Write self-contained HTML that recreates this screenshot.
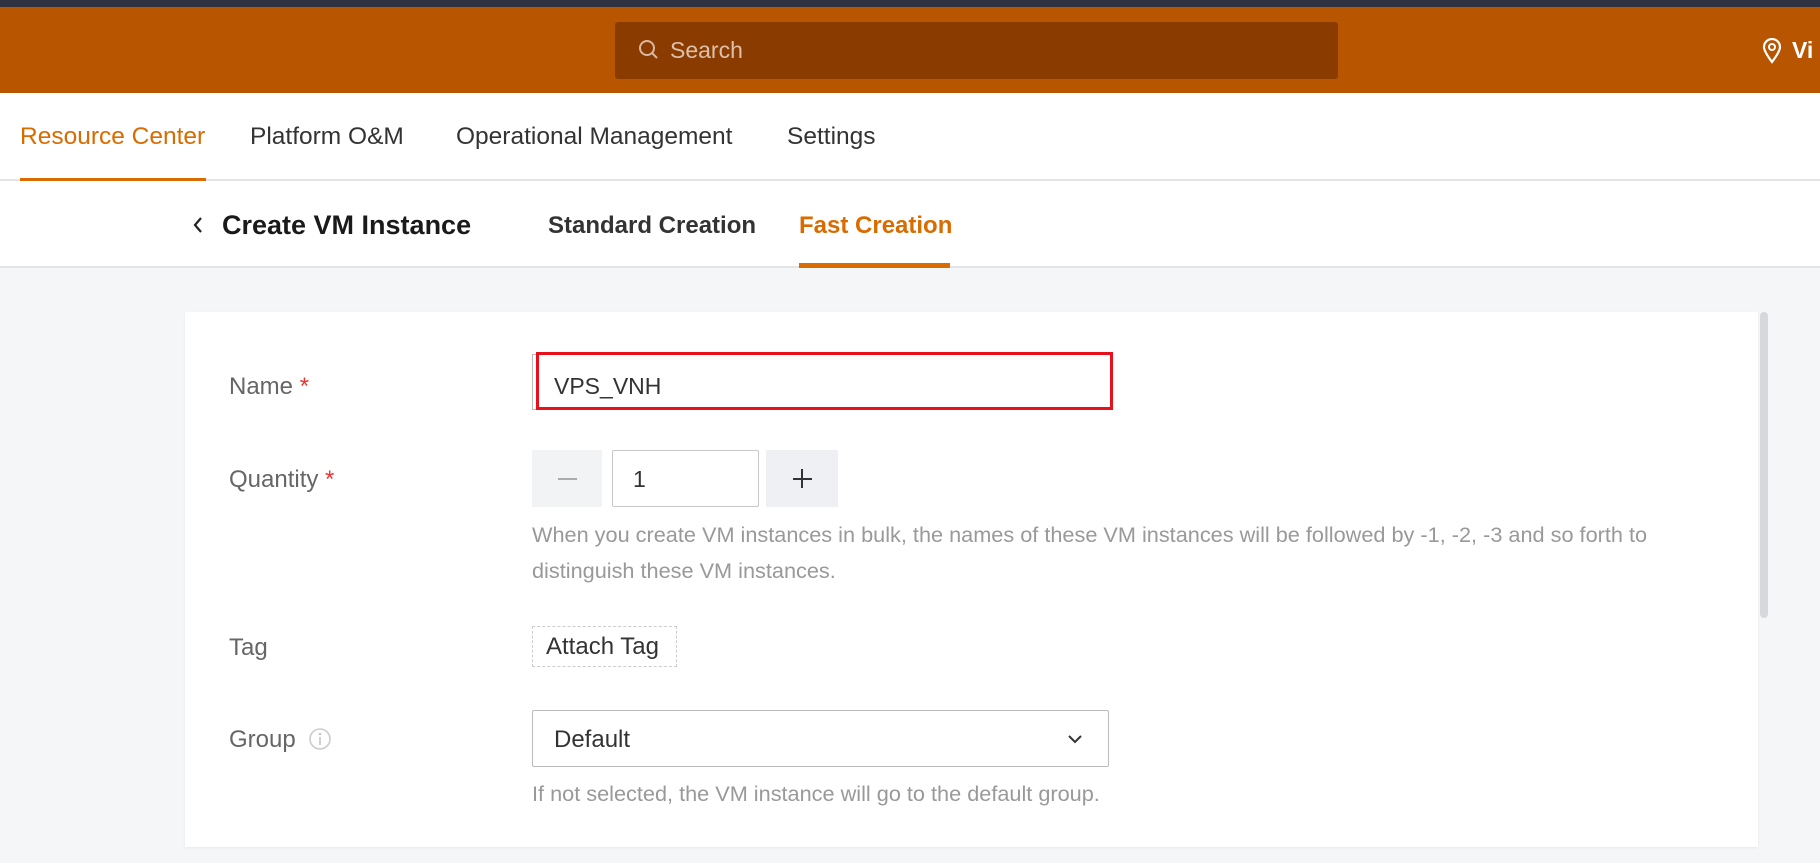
<!DOCTYPE html>
<html><head><meta charset="utf-8"><style>
*{margin:0;padding:0;box-sizing:border-box}
body{width:1820px;height:863px;overflow:hidden;background:#f5f6f8;font-family:"Liberation Sans",sans-serif;position:relative}
.a{position:absolute;white-space:nowrap}
</style></head><body>
<div class="a" style="left:0;top:0;width:1820px;height:7px;background:#2f3240"></div>
<div class="a" style="left:0;top:7px;width:1820px;height:86px;background:#b85500"></div>
<div class="a" style="left:615px;top:22px;width:723px;height:57px;background:#8a3c00;border-radius:3px"></div>
<svg class="a" style="left:638px;top:39px" width="22" height="22" viewBox="0 0 22 22"><circle cx="9" cy="9" r="7" fill="none" stroke="#d9b8a0" stroke-width="2"/><path d="M14 14l5 5" stroke="#d9b8a0" stroke-width="2"/></svg>
<div class="a" style="left:670px;top:37px;font-size:23px;color:#dcc0ab">Search</div>
<svg class="a" style="left:1762px;top:38px" width="20" height="26" viewBox="0 0 20 26"><path d="M10 24C4 16 2 12 2 9a8 8 0 0116 0c0 3-2 7-8 15z" fill="none" stroke="#fff" stroke-width="2.2"/><circle cx="10" cy="9" r="3" fill="none" stroke="#fff" stroke-width="2"/></svg>
<div class="a" style="left:1792px;top:37px;font-size:23px;color:#fff;font-weight:bold">Vi</div>
<div class="a" style="left:0;top:93px;width:1820px;height:88px;background:#fff;border-bottom:2px solid #e4e4e4"></div>
<div class="a" style="left:20px;top:123px;font-size:24.5px;color:#d96b00">Resource Center</div>
<div class="a" style="left:20px;top:178px;width:186px;height:3px;background:#d96b00"></div>
<div class="a" style="left:250px;top:123px;font-size:24.5px;color:#333">Platform O&amp;M</div>
<div class="a" style="left:456px;top:123px;font-size:24.5px;color:#333">Operational Management</div>
<div class="a" style="left:787px;top:123px;font-size:24.5px;color:#333">Settings</div>
<div class="a" style="left:0;top:181px;width:1820px;height:87px;background:#fff;border-bottom:2px solid #e2e4e8"></div>
<svg class="a" style="left:192px;top:215px" width="12" height="20" viewBox="0 0 12 20"><path d="M9 3L3 10l6 7" fill="none" stroke="#222" stroke-width="2.2"/></svg>
<div class="a" style="left:222px;top:210px;font-size:27px;color:#1a1a1a;font-weight:bold">Create VM Instance</div>
<div class="a" style="left:548px;top:212px;font-size:24px;color:#333;font-weight:bold">Standard Creation</div>
<div class="a" style="left:799px;top:212px;font-size:24px;color:#d96b00;font-weight:bold">Fast Creation</div>
<div class="a" style="left:799px;top:263px;width:151px;height:5px;background:#d96b00"></div>
<div class="a" style="left:185px;top:312px;width:1573px;height:535px;background:#fff;box-shadow:0 1px 3px rgba(0,0,0,.06)"></div>
<div class="a" style="left:1760px;top:312px;width:8px;height:306px;background:#d8d8dc;border-radius:4px"></div>
<div class="a" style="left:229px;top:373px;font-size:24px;color:#666">Name <span style="color:#e33">*</span></div>
<div class="a" style="left:532px;top:354px;width:581px;height:56px;border:1px solid #bbb"></div>
<div class="a" style="left:536px;top:352px;width:577px;height:58px;border:3px solid #e8101a"></div>
<div class="a" style="left:554px;top:373px;font-size:23px;color:#333">VPS_VNH</div>
<div class="a" style="left:229px;top:466px;font-size:24px;color:#666">Quantity <span style="color:#e33">*</span></div>
<div class="a" style="left:532px;top:450px;width:70px;height:57px;background:#f2f3f5"></div>
<div class="a" style="left:558px;top:478px;width:19px;height:2px;background:#aaa"></div>
<div class="a" style="left:612px;top:450px;width:147px;height:57px;border:1px solid #c8c8c8;border-radius:2px"></div>
<div class="a" style="left:633px;top:466px;font-size:23px;color:#333">1</div>
<div class="a" style="left:766px;top:450px;width:72px;height:57px;background:#eef0f3"></div>
<div class="a" style="left:793px;top:478px;width:19px;height:2px;background:#333"></div>
<div class="a" style="left:801px;top:469px;width:2px;height:19px;background:#333"></div>
<div class="a" style="left:532px;top:517px;font-size:21.7px;color:#999;line-height:36px">When you create VM instances in bulk, the names of these VM instances will be followed by -1, -2, -3 and so forth to<br>distinguish these VM instances.</div>
<div class="a" style="left:229px;top:634px;font-size:24px;color:#666">Tag</div>
<div class="a" style="left:532px;top:626px;width:145px;height:41px;border:1px dashed #ccc"></div>
<div class="a" style="left:546px;top:633px;font-size:24px;color:#333">Attach Tag</div>
<div class="a" style="left:229px;top:726px;font-size:24px;color:#666">Group</div>
<svg class="a" style="left:308px;top:727px" width="24" height="24" viewBox="0 0 24 24"><circle cx="12" cy="12" r="10" fill="none" stroke="#ccc" stroke-width="1.6"/><circle cx="12" cy="7" r="1.3" fill="#ccc"/><path d="M12 10v8" stroke="#ccc" stroke-width="1.8"/></svg>
<div class="a" style="left:532px;top:710px;width:577px;height:57px;border:1px solid #bbb;border-radius:2px"></div>
<div class="a" style="left:554px;top:726px;font-size:24px;color:#333">Default</div>
<svg class="a" style="left:1067px;top:733px" width="16" height="12" viewBox="0 0 16 12"><path d="M2 3l6 6 6-6" fill="none" stroke="#333" stroke-width="2"/></svg>
<div class="a" style="left:532px;top:781px;font-size:21.7px;color:#999">If not selected, the VM instance will go to the default group.</div>
</body></html>
